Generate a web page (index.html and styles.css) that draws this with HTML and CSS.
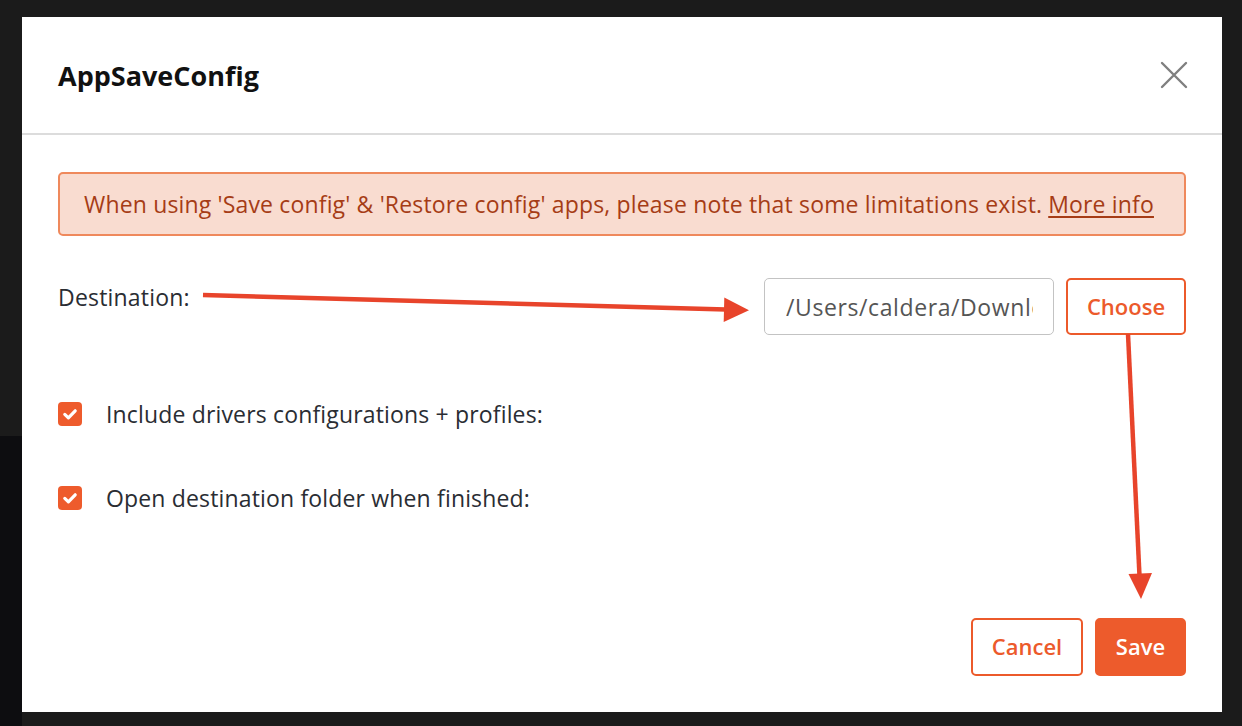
FILE: index.html
```html
<!DOCTYPE html>
<html lang="en">
<head>
<meta charset="utf-8">
<title>AppSaveConfig</title>
<link rel="stylesheet" href="styles.css">
</head>
<body>
<div class="backdrop">
  <div class="modal">
    <div class="modal-header">
      <h1 class="modal-title">AppSaveConfig</h1>
      <button class="close-btn" aria-label="Close">
        <svg width="28" height="28" viewBox="0 0 28 28"><path d="M2 2 L26 26 M26 2 L2 26" stroke="#7f7f7f" stroke-width="2.4" stroke-linecap="round" fill="none"/></svg>
      </button>
    </div>
    <div class="modal-body">
      <div class="alert">When using 'Save config' &amp; 'Restore config' apps, please note that some limitations exist. <a class="alert-link" href="#">More info</a></div>
      <div class="dest-row">
        <span class="dest-label">Destination:</span>
        <div class="dest-controls">
          <input class="path-input" type="text" value="/Users/caldera/Downloads" readonly>
          <button class="btn btn-outline btn-choose">Choose</button>
        </div>
      </div>
      <div class="check-list">
        <label class="check-row">
          <span class="checkbox"><svg width="24" height="24" viewBox="0 0 24 24"><path d="M6.8 12.4 L10.4 15.8 L17.2 8.8" stroke="#fff" stroke-width="3.2" stroke-linecap="round" stroke-linejoin="round" fill="none"/></svg></span>
          <span class="check-label">Include drivers configurations + profiles:</span>
        </label>
        <label class="check-row">
          <span class="checkbox"><svg width="24" height="24" viewBox="0 0 24 24"><path d="M6.8 12.4 L10.4 15.8 L17.2 8.8" stroke="#fff" stroke-width="3.2" stroke-linecap="round" stroke-linejoin="round" fill="none"/></svg></span>
          <span class="check-label">Open destination folder when finished:</span>
        </label>
      </div>
    </div>
    <div class="modal-footer">
      <button class="btn btn-outline btn-cancel">Cancel</button>
      <button class="btn btn-primary btn-save">Save</button>
    </div>
  </div>
</div>
<svg class="annotations" width="1242" height="726" viewBox="0 0 1242 726">
  <line x1="203" y1="295" x2="726" y2="309.6" stroke="#e8442b" stroke-width="4.5"/>
  <polygon points="724.3,297.5 749,310.3 723.7,322" fill="#e8442b"/>
  <line x1="1128" y1="334" x2="1139.5" y2="576" stroke="#e8442b" stroke-width="4.5"/>
  <polygon points="1128.5,574 1152,573 1141,599" fill="#e8442b"/>
</svg>
</body>
</html>
```
FILE: styles.css
```css
* { box-sizing: border-box; }
html, body {
  margin: 0;
  height: 726px;
  overflow: hidden;
}
body {
  background:
    linear-gradient(to right, #0d0d10 0, #0d0d10 22px, transparent 22px) 0 436px / 100% 290px no-repeat,
    linear-gradient(#1b1b1b, #1b1b1b);
  font-family: "Open Sans", "Noto Sans", sans-serif;
  color: #2a2d33;
  position: relative;
}
.backdrop {
  padding: 17px 20px 14px 22px;
}
.modal {
  width: 1200px;
  height: 695px;
  background: #fff;
  display: flex;
  flex-direction: column;
}
.modal-header {
  height: 118px;
  flex: none;
  display: flex;
  align-items: center;
  justify-content: space-between;
  padding: 0 36px;
  border-bottom: 2px solid #dcdcdc;
}
.modal-title {
  margin: 0;
  font-size: 27px;
  font-weight: 700;
  color: #111;
  letter-spacing: 0;
}
.close-btn {
  background: none;
  border: 0;
  padding: 0;
  width: 28px;
  height: 28px;
  margin-right: -2px;
  display: flex;
}
.modal-body {
  padding: 37px 36px 0;
}
.alert {
  height: 64px;
  display: flex;
  align-items: center;
  padding: 0 24px;
  background: #f9dcd0;
  border: 2px solid #ef895c;
  border-radius: 5px;
  color: #a63c16;
  font-size: 23px;
  letter-spacing: 0.16px;
  white-space: nowrap;
}
.alert-link {
  color: #a63c16;
  text-decoration: underline;
  text-underline-offset: 3px;
  margin-left: 6px;
}
.dest-row {
  margin-top: 42px;
  display: flex;
  justify-content: space-between;
  align-items: flex-start;
}
.dest-label {
  font-size: 23px;
  line-height: 38px;
  letter-spacing: 0.2px;
  color: #2a2d33;
}
.dest-controls {
  display: flex;
  gap: 12px;
}
.path-input {
  width: 290px;
  height: 57px;
  border: 1.5px solid #c3c3c3;
  border-radius: 5px;
  padding: 0 20px 0 21px;
  font-family: "Open Sans", "Noto Sans", sans-serif;
  font-size: 23px;
  letter-spacing: 0.6px;
  color: #555;
  background: #fff;
  outline: none;
}
.btn {
  height: 57px;
  border-radius: 5px;
  font-family: "Open Sans", "Noto Sans", sans-serif;
  font-size: 22px;
  font-weight: 600;
  padding: 0;
  cursor: pointer;
}
.btn-outline {
  background: #fff;
  color: #ec5a2b;
  border: 2px solid #ec5a2b;
}
.btn-primary {
  background: #ed5b2c;
  color: #fff;
  border: 2px solid #ed5b2c;
}
.btn-choose { width: 120px; padding-bottom: 2px; }
.check-list {
  margin-top: 67px;
  display: flex;
  flex-direction: column;
  gap: 60px;
}
.check-row {
  display: flex;
  align-items: center;
  gap: 24px;
  height: 24px;
}
.checkbox {
  width: 24px;
  height: 24px;
  border-radius: 4px;
  background: #ee5b2c;
  display: flex;
}
.check-label {
  font-size: 23px;
  letter-spacing: 0.16px;
  color: #2a2d33;
}
.modal-footer {
  margin-top: auto;
  display: flex;
  justify-content: flex-end;
  gap: 12px;
  padding: 0 36px 36px;
}
.btn-cancel { width: 112px; height: 58px; padding-bottom: 2px; }
.btn-save { width: 91px; height: 58px; padding-bottom: 2px; }
.annotations {
  position: absolute;
  top: 0;
  left: 0;
  pointer-events: none;
}
```
